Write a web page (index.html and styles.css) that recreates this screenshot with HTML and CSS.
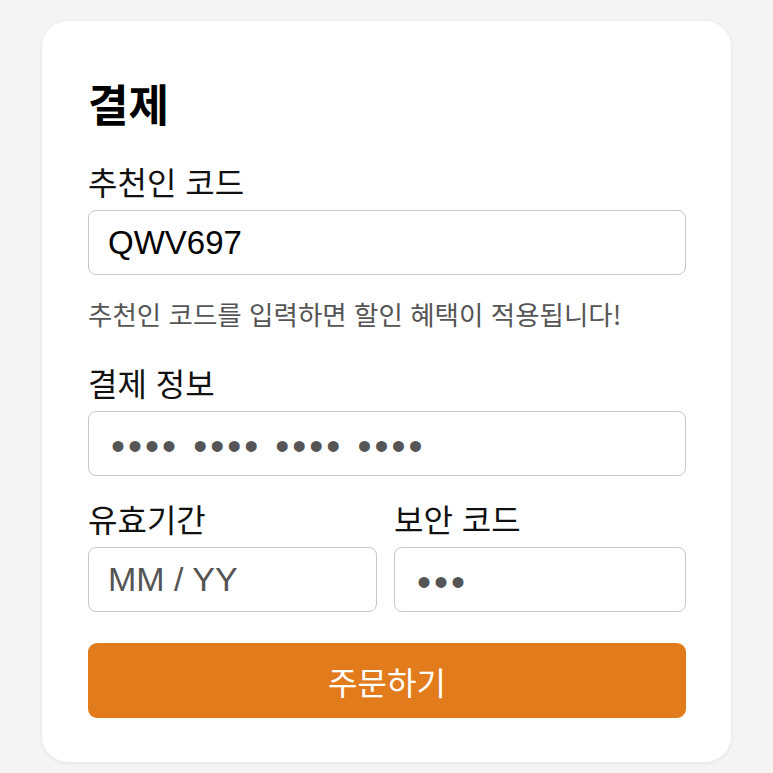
FILE: index.html
```html
<!DOCTYPE html>
<html lang="ko">
<head>
<meta charset="utf-8">
<link rel="stylesheet" href="styles.css">
</head>
<body>
<div class="card">
  <h1 class="title">결제</h1>
  <div class="label first">추천인 코드</div>
  <div class="field"><span class="value">QWV697</span></div>
  <p class="hint">추천인 코드를 입력하면 할인 혜택이 적용됩니다!</p>
  <div class="label section">결제 정보</div>
  <div class="field"><span class="dots">•••• •••• •••• ••••</span></div>
  <div class="row">
    <div class="col">
      <div class="label">유효기간</div>
      <div class="field"><span class="placeholder">MM / YY</span></div>
    </div>
    <div class="col">
      <div class="label">보안 코드</div>
      <div class="field"><span class="dots">•••</span></div>
    </div>
  </div>
  <button class="btn">주문하기</button>
</div>
</body>
</html>
```

FILE: styles.css
```css
* { box-sizing: border-box; }
html, body { margin: 0; padding: 0; }
body {
  background: #f5f4f2;
  font-family: "Noto Sans CJK KR", "Noto Sans", sans-serif;
  color: #111;
  width: 773px;
  height: 773px;
  overflow: hidden;
}
.card {
  margin: 21px 42px 0 42px;
  width: 689px;
  height: 741px;
  background: #fff;
  border-radius: 26px;
  box-shadow: 0 1px 4px rgba(0,0,0,0.08);
  padding: 58px 45px 0 46px;
}
.title {
  margin: 0;
  font-size: 44px;
  font-weight: 700;
  line-height: 48px;
  color: #000;
}
.label {
  font-size: 32px;
  line-height: 36px;
  margin-top: 24px;
  margin-bottom: 11px;
  color: #111;
}
.label.first { margin-top: 36px; }
.label.section { margin-top: 34px; }
.field {
  height: 65px;
  border: 1.5px solid #c6c6c6;
  border-radius: 8px;
  display: flex;
  align-items: center;
  padding: 0 19px;
}
.value {
  font-family: "Liberation Sans", Arial, sans-serif;
  font-size: 33px;
  color: #000;
}
.placeholder {
  font-family: "Liberation Sans", Arial, sans-serif;
  font-size: 34px;
  color: #555;
}
.dots {
  font-family: "Liberation Sans", Arial, sans-serif;
  font-size: 40px;
  line-height: 1;
  color: #555;
  letter-spacing: 3px;
  margin-left: 3px;
  padding-top: 5px;
}
.hint {
  margin: 23px 0 0 0;
  font-size: 26.5px;
  line-height: 32px;
  color: #555;
}
.row {
  display: flex;
  gap: 17px;
}
.col { flex: 1; }
.col:first-child { flex: 0 0 289px; }
.col .label { margin-top: 24px; }
.btn {
  display: block;
  width: 100%;
  height: 75px;
  margin-top: 31px;
  background: #e27b1b;
  border: none;
  border-radius: 9px;
  color: #fff;
  font-family: "Noto Sans CJK KR", sans-serif;
  font-size: 32px;
}
```
